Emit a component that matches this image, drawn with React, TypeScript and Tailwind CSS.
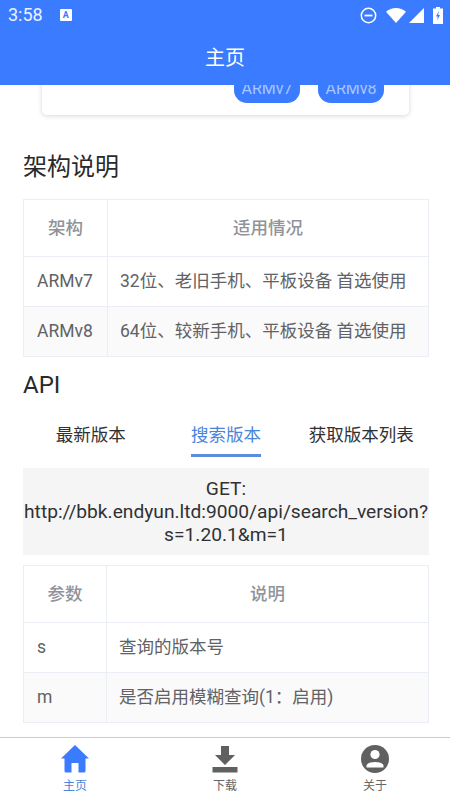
import type { ReactNode } from 'react'

const font = { fontFamily: '"Roboto", "Noto Sans CJK SC", sans-serif' }

type TableProps = {
  firstWidth: string
  heads: [string, string]
  rows: [string, string][]
}

// 表格：表头 + 两行，第二行灰底
function InfoTable({ firstWidth, heads, rows }: TableProps) {
  return (
    <div className="ml-[23px] mr-[21px] border border-[#ebeef5] text-[17.5px] leading-[24px]">
      <div className="flex h-[57px] border-b border-[#ebeef5] font-medium text-[#909399]">
        <div className={`${firstWidth} flex shrink-0 items-center justify-center border-r border-[#ebeef5]`}>
          {heads[0]}
        </div>
        <div className="flex flex-1 items-center justify-center">{heads[1]}</div>
      </div>
      {rows.map((row, index) => (
        <div
          key={row[0]}
          className={`flex text-[#606266] ${index === 1 ? 'h-[49px] bg-[#fafafa]' : 'h-[50px] border-b border-[#ebeef5]'}`}
        >
          <div className={`${firstWidth} flex shrink-0 items-center border-r border-[#ebeef5] pb-[1px] pl-[13px]`}>
            {row[0]}
          </div>
          <div className="flex flex-1 items-center pb-[1px] pl-[12px]">{row[1]}</div>
        </div>
      ))}
    </div>
  )
}

function TabItem({ label, color, children }: { label: string; color: string; children: ReactNode }) {
  return (
    <div className="flex flex-1 flex-col items-center pt-[7px]">
      {children}
      <span className={`mt-[4px] text-[12px] leading-[18px] ${color}`}>{label}</span>
    </div>
  )
}

function App() {
  return (
    <div className="flex h-[800px] w-[450px] flex-col overflow-hidden bg-white" style={font}>
      {/* 状态栏 + 标题栏 */}
      <header className="z-10 h-[85px] shrink-0 bg-[#3b7bff] text-white">
        <div className="flex h-[30px] items-center pl-[8px] pr-[7px]">
          <span className="text-[18px] leading-[30px] opacity-90">3:58</span>
          <span className="relative ml-[17px] flex h-[12px] w-[12px] items-center justify-center rounded-[1px] bg-white text-[9px] font-bold leading-none text-[#3b7bff]">
            A
          </span>
          <div className="ml-auto flex items-center">
            <svg width="17" height="17" viewBox="0 0 17 17" fill="none" stroke="white" strokeWidth="1.5">
              <circle cx="8.5" cy="8.5" r="7.2" />
              <path d="M4.5 8.5h8" strokeWidth="1.8" />
            </svg>
            <svg className="ml-[9px]" width="20" height="15" viewBox="0 0 20 15" fill="white">
              <path d="M0 3.8C2.7 1.4 6.2 0 10 0s7.300 1.400 10 3.800L10 15z" />
            </svg>
            <svg className="ml-[3px]" width="15" height="15" viewBox="0 0 15 15" fill="white">
              <path d="M15 0v15H0z" />
            </svg>
            <svg className="ml-[9px]" width="10" height="17" viewBox="0 0 10 17">
              <path d="M3 0h4v1.500h3V17H0V1.500h3z" fill="white" />
              <path d="M5.800 4 3 9.500h1.800L4.200 13.500 7 8H5.200z" fill="#3b7bff" />
            </svg>
          </div>
        </div>
        <div className="flex h-[55px] items-center justify-center text-[20px]">主页</div>
      </header>

      <main className="min-h-0 flex-1 overflow-hidden text-[#303133]">
        {/* 上方卡片，已被滚动遮住一部分 */}
        <div className="-mt-[40px] ml-[42px] mr-[41px] flex h-[70px] items-start justify-end gap-[18px] rounded-b-[5px] bg-white pr-[25px] pt-[29px] shadow-[0_1px_5px_rgba(0,0,0,0.16)]">
          <span className="flex h-[29px] w-[66px] items-center justify-center rounded-[13px] bg-[#3b7bff] text-[16px] text-[#a9c6ff]">
            ARMv7
          </span>
          <span className="flex h-[29px] w-[66px] items-center justify-center rounded-[13px] bg-[#3b7bff] text-[16px] text-[#a9c6ff]">
            ARMv8
          </span>
        </div>

        <h2 className="mx-[23px] mt-[36px] text-[24px] leading-[32px] text-[#2a2a2a]">架构说明</h2>
        <div className="mt-[16px]">
          <InfoTable
            firstWidth="w-[84px]"
            heads={['架构', '适用情况']}
            rows={[
              ['ARMv7', '32位、老旧手机、平板设备 首选使用'],
              ['ARMv8', '64位、较新手机、平板设备 首选使用'],
            ]}
          />
        </div>

        <h2 className="mx-[23px] mt-[12px] text-[24px] leading-[32px] text-[#2a2a2a]">API</h2>

        {/* API 切换 */}
        <div className="ml-[23px] mr-[21px] mt-[22px] flex text-[17.5px] leading-[24px] text-[#303133]">
          <div className="flex flex-1 justify-center">最新版本</div>
          <div className="flex flex-1 justify-center">
            <span className="border-b-[3px] border-[#5a8de0] pb-[7px] text-[#4a84dc]">搜索版本</span>
          </div>
          <div className="flex flex-1 justify-center">获取版本列表</div>
        </div>

        <div className="ml-[23px] mr-[21px] mt-[11px] bg-[#f5f5f5] py-[9px] text-center text-[19.2px] leading-[23px] text-[#303133]">
          GET:
          <br />
          http://bbk.endyun.ltd:9000/api/search_version?
          <br />
          s=1.20.1&amp;m=1
        </div>

        <div className="mt-[10px]">
          <InfoTable
            firstWidth="w-[83px]"
            heads={['参数', '说明']}
            rows={[
              ['s', '查询的版本号'],
              ['m', '是否启用模糊查询(1：启用)'],
            ]}
          />
        </div>
      </main>

      {/* 底部导航 */}
      <nav className="flex h-[63px] shrink-0 border-t border-[#cccccc] bg-white">
        <TabItem label="主页" color="text-[#4a84dc]">
          <svg width="28" height="28" viewBox="0 0 28 28" fill="#3b7bff">
            <path d="M14 0 28 13.500h-3.500V26a1.500 1.500 0 0 1-1.500 1.500h-5.500V18h-7v9.500H5A1.500 1.500 0 0 1 3.500 26V13.500H0z" />
          </svg>
        </TabItem>
        <TabItem label="下载" color="text-[#666666]">
          <svg width="28" height="28" viewBox="0 0 28 28" fill="#606060">
            <path d="M10 1h8v9h6L14 20 4 10h6zM1.500 22h25v5.500h-25z" />
          </svg>
        </TabItem>
        <TabItem label="关于" color="text-[#666666]">
          <svg width="28" height="28" viewBox="0 0 28 28">
            <circle cx="14" cy="14" r="14" fill="#606060" />
            <circle cx="14" cy="9.500" r="4.600" fill="white" />
            <path d="M5.500 22.500v-1.500c0-2.500 3.500-4 8.500-4s8.500 1.500 8.500 4v1.500z" fill="white" />
          </svg>
        </TabItem>
      </nav>
    </div>
  )
}

export default App
